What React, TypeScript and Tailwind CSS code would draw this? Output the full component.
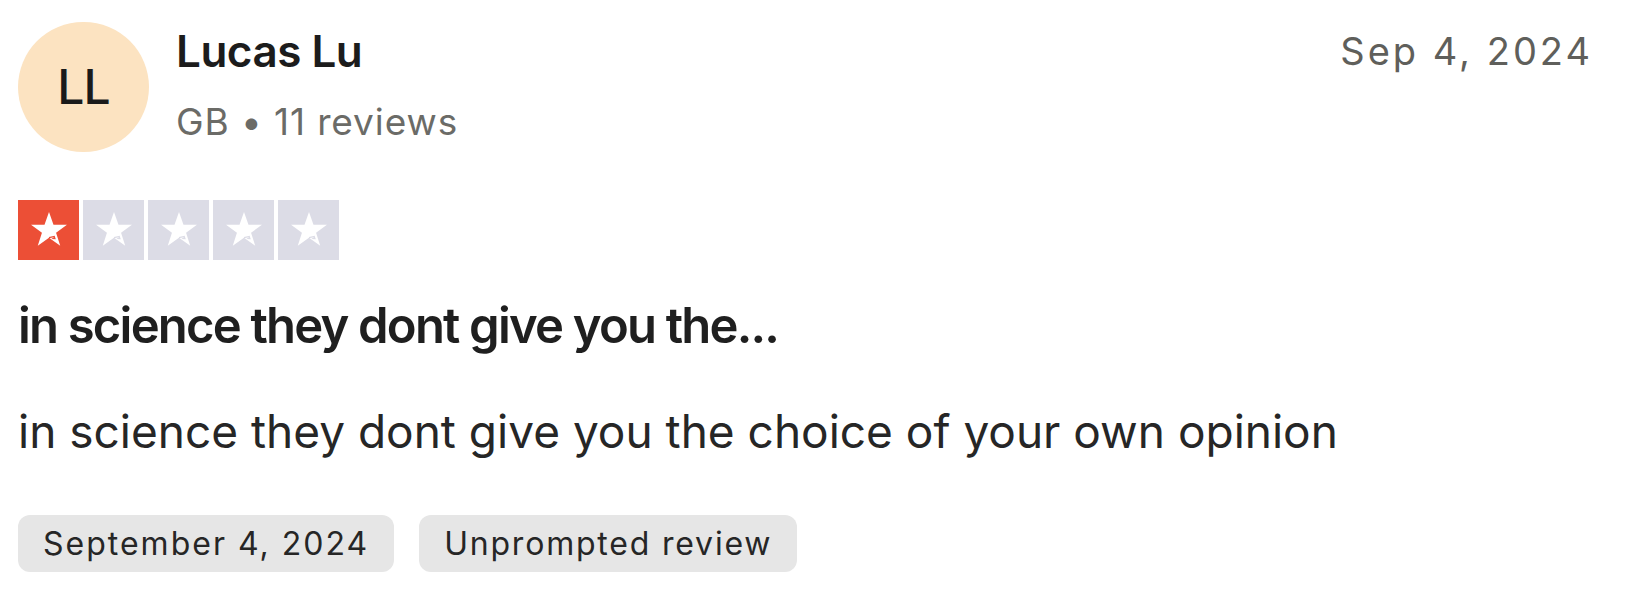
import React from "react";

function Star({ active }: { active: boolean }) {
  const bg = active ? "bg-[#ec4f36]" : "bg-[#dcdce6]";
  const cut = active ? "#ec4f36" : "#dcdce6";
  return (
    <div className={`w-[61px] h-[60px] ${bg} flex items-center justify-center`}>
      <svg width="44" height="44" viewBox="0 0 24 24">
        <path
          d="M12 2.2l2.45 6.98h7.35l-5.95 4.32 2.27 7.06L12 16.2l-6.12 4.36 2.27-7.06L2.2 9.18h7.35z"
          fill="#ffffff"
        />
        <path d="M13.3 16.9l1.9-1.4 0.5 1.6z" fill={cut} />
        <path d="M12 16.2l3.2-0.7" stroke={cut} strokeWidth="0.7" />
      </svg>
    </div>
  );
}

export default function App() {
  return (
    <div
      className="w-[1636px] h-[598px] bg-white pl-[18px] pr-[43px] pt-[22px] overflow-hidden"
      style={{ fontFamily: "Inter, 'Liberation Sans', sans-serif" }}
    >
      <div className="flex items-start justify-between">
        <div className="flex items-start gap-[27px]">
          <div className="w-[131px] h-[130px] rounded-full bg-[#fce3c1] flex items-center justify-center">
            <span className="text-[48px] leading-none font-medium text-[#1a1a1a] tracking-[-1px]">LL</span>
          </div>
          <div className="flex flex-col pt-[7px]">
            <div className="text-[44px] leading-none font-semibold text-[#1c1c1c] tracking-[-0.5px]">Lucas Lu</div>
            <div className="text-[37px] leading-none text-[#6b6b67] mt-[30px] tracking-[0.9px]">
              GB • 11 reviews
            </div>
          </div>
        </div>
        <div className="pt-[10px] text-[38px] leading-none text-[#5f5f5b] tracking-[3px]">Sep 4, 2024</div>
      </div>

      <div className="flex gap-[4px] mt-[48px]">
        <Star active />
        <Star active={false} />
        <Star active={false} />
        <Star active={false} />
        <Star active={false} />
      </div>

      <div className="mt-[41px] text-[49px] leading-none font-semibold text-[#1f1f1f] tracking-[-1.8px]">
        in science they dont give you the...
      </div>

      <div className="mt-[58px] text-[46px] leading-none text-[#262626] tracking-[0px]">
        in science they dont give you the choice of your own opinion
      </div>

      <div className="flex gap-[25px] mt-[61px]">
        <div className="bg-[#e6e6e6] rounded-[12px] px-[25px] py-[12.5px] text-[32px] leading-none text-[#262626] tracking-[2px]">
          September 4, 2024
        </div>
        <div className="bg-[#e6e6e6] rounded-[12px] px-[25px] py-[12.5px] text-[32px] leading-none text-[#262626] tracking-[1.8px]">
          Unprompted review
        </div>
      </div>
    </div>
  );
}
